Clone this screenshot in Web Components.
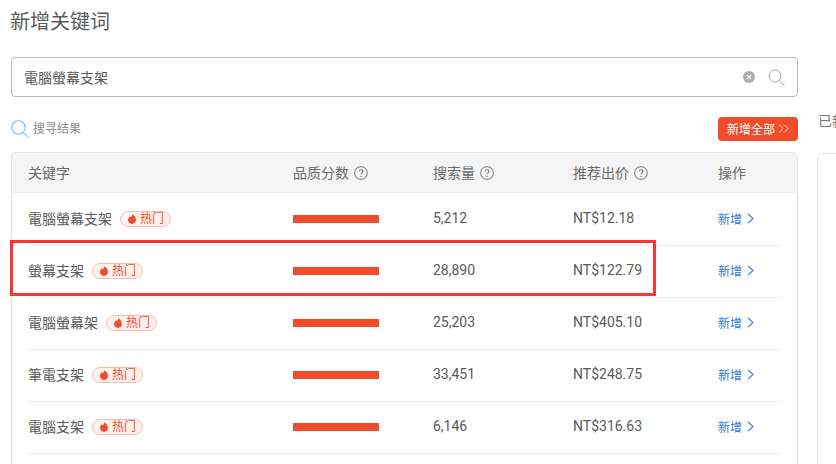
<!DOCTYPE html>
<html lang="zh">
<head>
<meta charset="utf-8">
<title>新增关键词</title>
<style>
  html, body { margin: 0; height: 100%; overflow: hidden; background: #fff; }
  body { font-family: Roboto, "Noto Sans CJK TC", "Noto Sans CJK SC", sans-serif; color: #5a5a5a; font-size: 14px; }
</style>
</head>
<body>
<kw-page>
  <kw-search slot="search" value="電腦螢幕支架"></kw-search>
  <kw-row name="電腦螢幕支架" volume="5,212" price="NT$12.18"></kw-row>
  <kw-row name="螢幕支架" volume="28,890" price="NT$122.79"></kw-row>
  <kw-row name="電腦螢幕架" volume="25,203" price="NT$405.10"></kw-row>
  <kw-row name="筆電支架" volume="33,451" price="NT$248.75"></kw-row>
  <kw-row name="電腦支架" volume="6,146" price="NT$316.63"></kw-row>
</kw-page>

<script>
const helpIcon = `<svg width="14" height="14" viewBox="0 0 14 14" fill="none">
  <circle cx="7" cy="7" r="6.400" stroke="#8f8f8f" stroke-width="1.100"/>
  <path d="M5.100 5.500a1.900 1.900 0 1 1 2.900 1.600c-.6.4-1 .7-1 1.500" stroke="#808080" stroke-width="1.100"/>
  <circle cx="7" cy="10.400" r=".7" fill="#808080"/>
</svg>`;

class KwSearch extends HTMLElement {
  constructor() {
    super();
    this.attachShadow({ mode: 'open' });
    this.shadowRoot.innerHTML = `
      <style>
        :host { display: flex; align-items: center; box-sizing: border-box; height: 40px;
          border: 1px solid #b9b9b9; border-radius: 4px; padding: 0 12px 0 12px; }
        .value { flex: 1; font-size: 14px; color: #5a5a5a; }
        svg { display: block; flex: none; }
        .clear { margin-right: 13px; }
      </style>
      <span class="value"></span>
      <svg class="clear" width="12" height="12" viewBox="0 0 12 12">
        <circle cx="6" cy="6" r="6" fill="#adadad"/>
        <path d="M3.800 3.800l4.400 4.400M8.200 3.800l-4.400 4.400" stroke="#fff" stroke-width="1.200"/>
      </svg>
      <svg width="17" height="17" viewBox="0 0 17 17" fill="none">
        <circle cx="7" cy="7" r="6" stroke="#a8a8a8" stroke-width="1"/>
        <path d="M11.300 11.300l5 5" stroke="#a8a8a8" stroke-width="1"/>
      </svg>`;
    this.shadowRoot.querySelector('.value').textContent = this.getAttribute('value');
  }
}
customElements.define('kw-search', KwSearch);

class KwRow extends HTMLElement {
  constructor() {
    super();
    this.attachShadow({ mode: 'open' });
    this.shadowRoot.innerHTML = `
      <style>
        :host { display: grid; grid-template-columns: 265px 140px 140px 145px 1fr; align-items: center;
          box-sizing: border-box; height: 52px; padding-bottom: 1px; margin-right: 16px; margin-left: 16px;
          border-bottom: 1px solid #ececec; font-size: 14px; color: #5a5a5a; }
        .kw { display: flex; align-items: center; gap: 8px; }
        .name { display: block; padding-bottom: 3px; }
        .volume, .price { padding-bottom: 2px; }
        .hot { display: inline-flex; align-items: center; gap: 4px; box-sizing: border-box; height: 16px;
          width: 51px; padding-left: 7px; border: 1px solid #fbbcb0; border-radius: 8px;
          background: #fff1ee; color: #f04d2d; font-size: 12px; line-height: 14px; }
        .hot svg { display: block; flex: none; }
        .bar { width: 86px; height: 8px; background: #f04d2d; }
        .add { display: flex; align-items: center; gap: 5px; padding-bottom: 2px; color: #2f7cd6; font-size: 12px; }
        .add svg { display: block; }
      </style>
      <div class="kw"><span class="name"></span>
        <span class="hot"><svg width="8" height="10" viewBox="0 0 8 10"><path d="M4.300 0C4.600 1.600 3.300 2.400 2.700 3.300 2.400 2.900 2.200 2.600 2.100 2.300 1 3.300 0 4.500 0 6.100 0 8.300 1.800 10 4 10s4-1.700 4-3.900C8 3.500 6.200 1.400 4.300 0z" fill="#f04d2d"/></svg>热门</span>
      </div>
      <div><div class="bar"></div></div>
      <div class="volume"></div>
      <div class="price"></div>
      <div class="add">新增<svg width="7" height="11" viewBox="0 0 7 11" fill="none"><path d="M1 .8l5 4.700-5 4.700" stroke="#2f7cd6" stroke-width="1.100"/></svg></div>`;
    this.shadowRoot.querySelector('.name').textContent = this.getAttribute('name');
    this.shadowRoot.querySelector('.volume').textContent = this.getAttribute('volume');
    this.shadowRoot.querySelector('.price').textContent = this.getAttribute('price');
  }
}
customElements.define('kw-row', KwRow);

class KwPage extends HTMLElement {
  constructor() {
    super();
    this.attachShadow({ mode: 'open' });
    this.shadowRoot.innerHTML = `
      <style>
        :host { display: flex; position: relative; width: 836px; height: 464px; overflow: hidden; }
        .main { flex: none; width: 787px; margin-left: 11px; }
        h1 { margin: 0 0 0 -1px; height: 57px; font-size: 20px; font-weight: 400; line-height: 44px; color: #5a5a5a; }
        .bar { display: flex; align-items: center; box-sizing: border-box; height: 55px; padding-top: 8px; }
        .found { display: flex; align-items: center; gap: 4px; flex: 1; color: #8c8c8c; font-size: 12px; }
        .found svg { display: block; }
        .found span { padding-bottom: 2px; }
        .all { display: flex; align-items: center; justify-content: center; gap: 3px; width: 80px; height: 24px;
          border-radius: 4px; background: #f04d2d; color: #fff; font-size: 12px; }
        .all svg { display: block; }
        .table { box-sizing: border-box; height: 320px; border: 1px solid #e6e6e6; border-radius: 4px 4px 0 0; border-bottom: 0; }
        .head { display: grid; grid-template-columns: 265px 140px 140px 145px 1fr; align-items: center;
          box-sizing: border-box; height: 41px; padding-left: 16px; padding-bottom: 1px; background: linear-gradient(#f5f5f5 39px, #ececec 39px, #ececec 40px, #fff 40px);
          color: #6a6a6a; font-size: 14px; }
        .head div { display: flex; align-items: center; gap: 5px; }
        .head span { padding-bottom: 3px; }
        .head svg { display: block; }
        .side { flex: none; width: 100px; margin-left: 20px; }
        .side p { margin: 0; padding-top: 112px; height: 41px; font-size: 14px; line-height: 18px; color: #777; white-space: nowrap; }
        .side div { height: 320px; border: 1px solid #e6e6e6; border-radius: 4px 0 0 0; margin-left: -1px; }
        .mark { position: absolute; left: 10px; top: 240px; width: 646px; height: 56px; box-sizing: border-box;
          border: 3px solid #fb3535; pointer-events: none; }
      </style>
      <div class="main">
        <h1>新增关键词</h1>
        <slot name="search"></slot>
        <div class="bar">
          <div class="found">
            <svg width="18" height="18" viewBox="0 0 18 18" fill="none"><circle cx="7.500" cy="7.500" r="6.700" stroke="#7fbcf5" stroke-width="1.100"/><path d="M12.300 12.300l5 5" stroke="#7fbcf5" stroke-width="1.100"/></svg>
            <span>搜寻结果</span>
          </div>
          <div class="all">新增全部<svg width="11" height="9" viewBox="0 0 11 9" fill="none"><path d="M1 .5l4 4-4 4M6 .5l4 4-4 4" stroke="#fbd0c6" stroke-width="1"/></svg></div>
        </div>
        <div class="table">
          <div class="head">
            <div><span>关键字</span></div>
            <div><span>品质分数</span>${helpIcon}</div>
            <div><span>搜索量</span>${helpIcon}</div>
            <div><span>推荐出价</span>${helpIcon}</div>
            <div><span>操作</span></div>
          </div>
          <slot></slot>
        </div>
      </div>
      <div class="side"><p>已新增关键词</p><div></div></div>
      <div class="mark"></div>`;
  }
}
customElements.define('kw-page', KwPage);
</script>
</body>
</html>
